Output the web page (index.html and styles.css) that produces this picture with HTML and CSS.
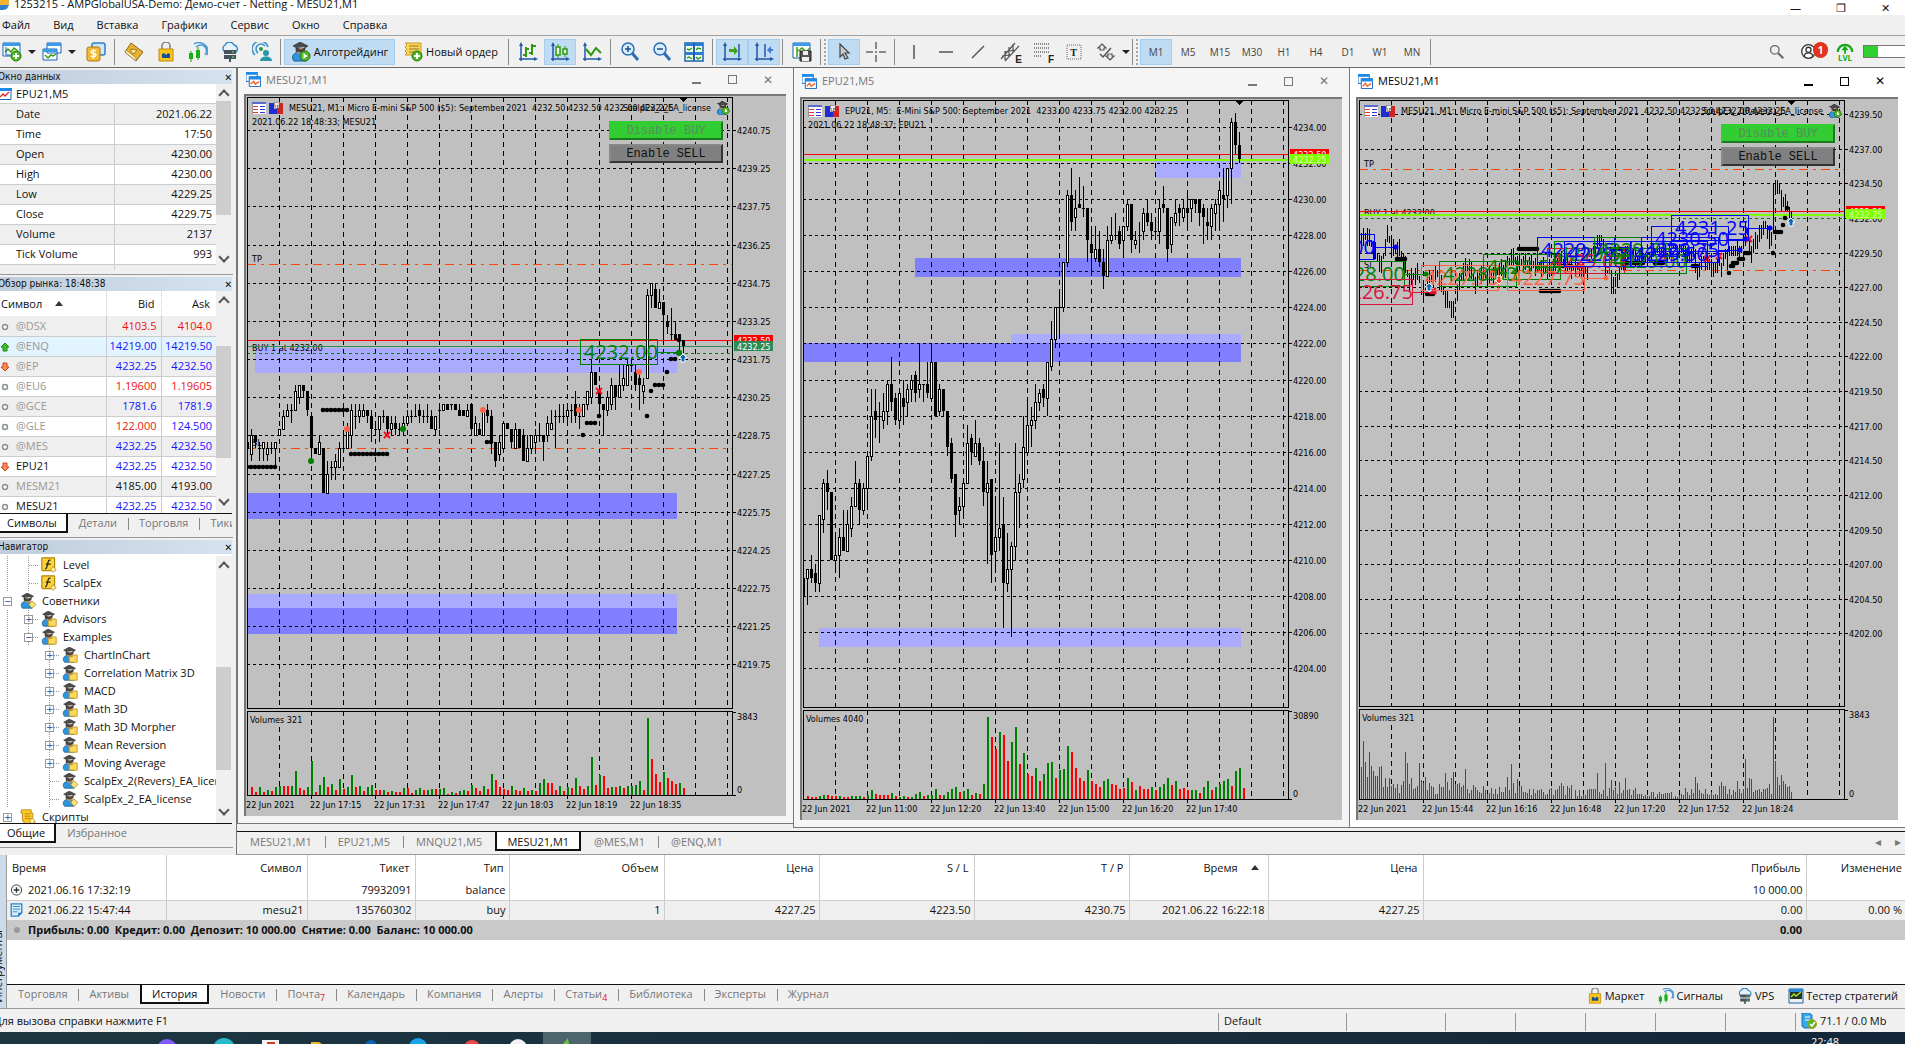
FILE: index.html
```
<!DOCTYPE html>
<html lang="ru">
    <head>
        <meta charset="utf-8">
        <title>1253215 - AMPGlobalUSA-Demo: Демо-счет - Netting - MESU21,M1</title>
        <link rel="stylesheet" href="styles.css">
    </head>
    <body>

<!----- ICONS ----->
        <svg class="sprite" aria-hidden="true">
            <symbol id="i-newchart" viewBox="0 0 20 20">
                <path d="M1 1h17v13H1z" fill="#fff" stroke="#1565b5"/><path d="M1 1h17v3H1z" fill="#3b9bea"/>
                <path d="M3 10l3-3 3 3 3-4 4 3" fill="none" stroke="#3a9a10" stroke-width="1.5"/><path d="M4 5v8h12" fill="none" stroke="#1d5fa8"/>
                <circle cx="14" cy="14" r="5" fill="#4cb825" stroke="#2c7a10"/><path d="M14 11v6M11 14h6" stroke="#fff" stroke-width="2"/>
            </symbol>
            <symbol id="i-windows" viewBox="0 0 20 20">
                <path d="M5 1h14v10H5zM1 7h14v11H1z" fill="#fff" stroke="#1565b5"/><path d="M5 1h14v3H5zM1 7h14v3H1z" fill="#3b9bea"/>
                <path d="M3 13l3 3 3-3 2 1 3-2" fill="none" stroke="#3a9a10" stroke-width="1.5"/>
            </symbol>
            <symbol id="i-money" viewBox="0 0 20 20">
                <rect x="6" y="1" width="13" height="12" rx="2" fill="#cfe6fb" stroke="#2f7fca" stroke-width="1.5"/>
                <rect x="1" y="5" width="13" height="14" rx="2" fill="#f3bb35" stroke="#ad7b0d"/>
                <path d="M10 9c-1-1-5-1-5 1s5 1 5 3-4 2-5 1M7.500 7v10" fill="none" stroke="#fff" stroke-width="1.400"/>
            </symbol>
            <symbol id="i-book" viewBox="0 0 20 20">
                <path d="M7 1l12 9-7 9-11-9z" fill="#e8b230" stroke="#8d6410"/><path d="M1 10l11 9v-3L2 8z" fill="#fff5c9" stroke="#8d6410" stroke-width=".6"/>
                <path d="M7 7l6 1-3 4-3-2z" fill="#fae9a5" stroke="#a97410"/>
            </symbol>
            <symbol id="i-bag" viewBox="0 0 20 20">
                <path d="M6 8V4a4 4 0 0 1 8 0v4" fill="none" stroke="#7d7d7d" stroke-width="1.500"/>
                <path d="M3 7h14v12H3z" fill="#fbc51b" stroke="#c18a0b"/><path d="M6 16v-4l2-1 2 2 2-2 2 1v4z" fill="#14509b"/>
            </symbol>
            <symbol id="i-signal" viewBox="0 0 20 20">
                <path d="M8 5a6 6 0 0 1 9 8M6 2a9 9 0 0 1 12 2 8 8 0 0 1 1 9" fill="none" stroke="#4b9ad8" stroke-width="1.500"/>
                <path d="M3 9v11M10 5v13" stroke="#18a018"/><path d="M1 11h4v6H1zM8 8h4v8H8z" fill="#18b018"/>
            </symbol>
            <symbol id="i-cloud" viewBox="0 0 20 20">
                <path d="M5 10a4 4 0 0 1 0-7 5 5 0 0 1 9 0 4 4 0 0 1 2 7z" fill="#e4f2fc" stroke="#2580c4" stroke-width="1.300"/>
                <path d="M4 8h12v4H4zM4 13h12v4H4zM9 17h2v3H9z" fill="#47535b"/><path d="M12 10h2M12 15h2" stroke="#6f5"/>
            </symbol>
            <symbol id="i-cast" viewBox="0 0 20 20">
                <path d="M3 13a8 8 0 1 1 13-8M6 11a5 5 0 1 1 7-7" fill="none" stroke="#3a94d2" stroke-width="1.600"/>
                <circle cx="9" cy="7" r="2" fill="#2e9b3a"/><circle cx="14" cy="11" r="3" fill="#2597a7"/><path d="M8 19c0-6 12-6 12 0z" fill="#2597a7"/>
            </symbol>
            <symbol id="i-robot" viewBox="0 0 20 20">
                <path d="M3 19c-4-5 1-9 5-9s7 4 7 9z" fill="#2f95de" stroke="#1c5f97"/><path d="M5 6h9v4l-4 3-5-3z" fill="#b99269"/>
                <path d="M2 4l7-4 8 4-7 4zM5 6v3l5 1 4-2V5" fill="#4a4a4a" stroke="#222" stroke-width=".6"/>
            </symbol>
            <symbol id="i-algo" viewBox="0 0 20 20">
                <use href="#i-robot"/><circle cx="14" cy="14" r="5" fill="#53b72d" stroke="#2a7010"/><path d="M12.500 11l4 3-4 3z" fill="#fff"/>
            </symbol>
            <symbol id="i-expert" viewBox="0 0 20 20">
                <use href="#i-robot"/><path d="M15 10l5 4.500-5 4.500-4-4.500z" fill="#fbe37b" stroke="#b08a13"/>
            </symbol>
            <symbol id="i-folder" viewBox="0 0 20 20">
                <use href="#i-robot"/><path d="M9 12h4l1-2h5v9H9z" fill="#fbd95b" stroke="#b98f12"/>
            </symbol>
            <symbol id="i-func" viewBox="0 0 20 20">
                <rect x="1" y="1" width="16" height="16" rx="1" fill="#fcd337" stroke="#b38505" stroke-width="1.500"/>
                <path d="M12 4c-3-1-3 2-4 6s-1 5-3 5M6 9h6" fill="none" stroke="#222" stroke-width="1.500"/>
                <path d="M15 12l4 4-4 3-3-3z" fill="#fff3b0" stroke="#b08a13"/>
            </symbol>
            <symbol id="i-script" viewBox="0 0 20 20">
                <path d="M2 1h12v4h2v9l3 3-2 2H5v-4H3V5H1z" fill="#fcc92d" stroke="#b07f09"/><path d="M6 6h7M6 9h7M6 12h7" stroke="#a9760a"/>
                <path d="M15 11l4 4-4 4-3-4z" fill="#fff3b0" stroke="#b08a13"/>
            </symbol>
            <symbol id="i-order" viewBox="0 0 20 20">
                <path d="M2 1h16v12H2l2-2-2-2 2-2-2-2 2-2z" fill="#fbd65e" stroke="#c9982a"/><path d="M6 4h10M6 7h10M6 10h7" stroke="#9a7420"/>
                <circle cx="14" cy="14" r="5" fill="#4cb825" stroke="#2c7a10"/><path d="M14 11v6M11 14h6" stroke="#fff" stroke-width="2"/>
            </symbol>
            <symbol id="i-axes" viewBox="0 0 20 20">
                <path d="M3 19V2M1 17h17" fill="none" stroke="#2257a8" stroke-width="1.500"/><path d="M1 4l2-4 2 4zM16 15l4 2-4 2z" fill="#2257a8"/>
            </symbol>
            <symbol id="i-bars" viewBox="0 0 20 20"><use href="#i-axes"/><path d="M8 5v10M5 13h3M8 7h3M14 2v11M14 4h4M11 11h3" fill="none" stroke="#2f9a10" stroke-width="2"/></symbol>
            <symbol id="i-candles" viewBox="0 0 20 20"><use href="#i-axes"/><path d="M8 2v14M15 4v11" stroke="#2f9a10"/><path d="M6 5h4v8H6zM13 7h4v5h-4z" fill="#e8ffe0" stroke="#2f9a10" stroke-width="1.500"/></symbol>
            <symbol id="i-line" viewBox="0 0 20 20"><use href="#i-axes"/><path d="M4 7l5 6 5-7 5 5" fill="none" stroke="#2f9a10" stroke-width="2"/></symbol>
            <symbol id="i-zoomin" viewBox="0 0 20 20"><path d="M12 11l6 7" stroke="#2a6db8" stroke-width="3"/><circle cx="8" cy="7" r="6" fill="#d9edfd" stroke="#2a6db8" stroke-width="1.500"/><path d="M8 4v6M5 7h6" stroke="#184f92" stroke-width="1.500"/></symbol>
            <symbol id="i-zoomout" viewBox="0 0 20 20"><path d="M12 11l6 7" stroke="#2a6db8" stroke-width="3"/><circle cx="8" cy="7" r="6" fill="#d9edfd" stroke="#2a6db8" stroke-width="1.500"/><path d="M5 7h6" stroke="#184f92" stroke-width="1.500"/></symbol>
            <symbol id="i-tile" viewBox="0 0 20 20">
                <path d="M1 1h18v18H1z" fill="#f4fff0" stroke="#1d63ad" stroke-width="1.500"/><path d="M1 1h18v3H1zM1 10h18v3H1z" fill="#2b7fd0"/><path d="M10 1v18" stroke="#1d63ad" stroke-width="2"/>
                <path d="M3 7l2 1 3-2M12 8l2-2 3 1M3 16l2-1 3 2M12 15l2 2 3-2" fill="none" stroke="#2f9a10" stroke-width="1.500"/>
            </symbol>
            <symbol id="i-scroll" viewBox="0 0 20 20"><use href="#i-axes"/><path d="M17 2v13" stroke="#2257a8" stroke-width="1.500"/><path d="M7 7h5V4l4 5-4 4v-3H7z" fill="#3aa31a"/></symbol>
            <symbol id="i-shift" viewBox="0 0 20 20"><use href="#i-axes"/><path d="M11 2v13" stroke="#2257a8" stroke-width="1.500"/><path d="M19 7h-2V4l-4 4 4 4v-3h2z" fill="#3b7bd0"/></symbol>
            <symbol id="i-save" viewBox="0 0 20 20">
                <path d="M1 1h17v15H1z" fill="#fff" stroke="#1565b5"/><path d="M1 1h17v3H1z" fill="#3b9bea"/><path d="M5 5v10M6 9l4-3 4 4 4-4" fill="none" stroke="#3a9a10" stroke-width="1.500"/>
                <path d="M8 9h11v10H8z" fill="#555" stroke="#222"/><path d="M11 9h5v4h-5zM10 15h7v4h-7z" fill="#eee"/>
            </symbol>
            <symbol id="i-cursor" viewBox="0 0 20 20"><path d="M6 2v13l3-3 2 5 3-1-3-5h4z" fill="#ccc" stroke="#444" stroke-width="1.200"/></symbol>
            <symbol id="i-cross" viewBox="0 0 20 20"><path d="M10 0v7M10 13v7M0 10h7M13 10h7M10 9v2" stroke="#666" stroke-width="1.500"/></symbol>
            <symbol id="i-vline" viewBox="0 0 20 20"><path d="M10 3v14" stroke="#555" stroke-width="1.500"/></symbol>
            <symbol id="i-hline" viewBox="0 0 20 20"><path d="M3 10h14" stroke="#555" stroke-width="1.500"/></symbol>
            <symbol id="i-slash" viewBox="0 0 20 20"><path d="M4 16L16 4" stroke="#555" stroke-width="1.500"/></symbol>
            <symbol id="i-channel" viewBox="0 0 20 20"><path d="M1 17L15 1M5 19L19 4M5 9v9M9 5v9M13 2v8M2 14l8-1M5 10l9-2" fill="none" stroke="#555" stroke-width="1.200"/></symbol>
            <symbol id="i-fibo" viewBox="0 0 20 20"><path d="M2 2h15M2 6h15M2 10h15M2 14h8" stroke="#666" stroke-width="1.500" stroke-dasharray="1 1"/></symbol>
            <symbol id="i-text" viewBox="0 0 20 20"><path d="M3 3h14v14H3z" fill="none" stroke="#666" stroke-dasharray="1 1"/></symbol>
            <symbol id="i-arrows" viewBox="0 0 20 20"><path d="M6 2l4 4H8v2H4V6H2zM14 18l4-4h-2v-2h-4v2h-2z" fill="none" stroke="#555" stroke-width="1.200"/><path d="M4 12l3 3 8-9" fill="none" stroke="#555" stroke-width="1.500"/></symbol>
            <symbol id="i-search" viewBox="0 0 20 20"><circle cx="8" cy="8" r="5" fill="none" stroke="#666" stroke-width="1.500"/><path d="M12 12l6 6" stroke="#666" stroke-width="2.500"/></symbol>
            <symbol id="i-user" viewBox="0 0 20 20"><circle cx="10" cy="10" r="8" fill="#fff" stroke="#333" stroke-width="1.500"/><circle cx="10" cy="8" r="3" fill="none" stroke="#333" stroke-width="1.500"/><path d="M5 16c0-6 10-6 10 0" fill="none" stroke="#333" stroke-width="1.500"/></symbol>
            <symbol id="i-level" viewBox="0 0 20 14"><path d="M2 12a8 8 0 1 1 16 0" fill="none" stroke="#19a819" stroke-width="2.500"/><path d="M10 5l4 5h-3v4H9v-4H6z" fill="#19a819"/></symbol>
            <symbol id="i-chart" viewBox="0 0 16 16">
                <path d="M0 0h12v10H0z" fill="#fff" stroke="#1268c4"/><path d="M0 0h12v3H0z" fill="#1e8ae8"/>
                <path d="M3.500 5h12v10.500h-12z" fill="#fff" stroke="#1268c4"/><path d="M3 5h13v3H3z" fill="#1e8ae8"/><path d="M5 13l3-3 2 3 4-3" fill="none" stroke="#f0642b" stroke-width="1.500"/>
            </symbol>
            <symbol id="i-data" viewBox="0 0 12 12"><path d="M-4 .5h15v11H-4z" fill="#fff" stroke="#1268c4"/><path d="M-4 0h16v3H-4z" fill="#1e8ae8"/><path d="M0 9l3-3 2 2 4-4" fill="none" stroke="#e03030" stroke-width="1.500"/></symbol>
            <symbol id="i-doc" viewBox="0 0 14 16"><path d="M1 1h12v10l-4 4H1z" fill="#d5ecfc" stroke="#2386cc" stroke-width="1.500"/><path d="M3 4h8M3 7h8M3 10h5" stroke="#2386cc"/><path d="M9 15v-4h4z" fill="#1673ba"/></symbol>
            <symbol id="i-plus" viewBox="0 0 14 14"><circle cx="7" cy="7" r="5.500" fill="#fff" stroke="#333"/><path d="M7 4v6M4 7h6" stroke="#333" stroke-width="1.500"/></symbol>
            <symbol id="i-tester" viewBox="0 0 16 16"><path d="M1 1h14v14H1z" fill="#eee" stroke="#1c60ab"/><path d="M1 1h14v3H1z" fill="#2d86da"/><path d="M2 4h12v7H2z" fill="#253326"/><path d="M3 9l3-3 2 2 5-4" fill="none" stroke="#a5e02a" stroke-width="1.500"/></symbol>
            <symbol id="i-server" viewBox="0 0 16 16"><path d="M1 0h7l3 2v13H3l-2-2z" fill="#3aa7ea" stroke="#1873b8"/><path d="M4 4h5M4 7h5" stroke="#fff"/><circle cx="11" cy="11" r="4.500" fill="#53b72d" stroke="#b79c15"/><path d="M9 11l2 2 3-4" fill="none" stroke="#fff" stroke-width="1.500"/></symbol>
            <symbol id="i-none" viewBox="0 0 10 10"><circle cx="5" cy="5" r="2.500" fill="#fff" stroke="#8a958a" stroke-width="1.500"/></symbol>
            <symbol id="i-up" viewBox="0 0 10 10"><path d="M5 1l4 4H7v4H3V5H1z" fill="#3dc22b" stroke="#178a0c"/></symbol>
            <symbol id="i-down" viewBox="0 0 10 10"><path d="M5 9l4-4H7V1H3v4H1z" fill="#ff8a5c" stroke="#d2421a"/></symbol>
            <symbol id="i-market" viewBox="0 0 14 12"><path d="M0 0h14v12H0z" fill="#fff" stroke="#999"/><path d="M0 0h14v2H0z" fill="#5a6ad0"/><path d="M1 4h5M1 7h5M1 10h5" stroke="#e33"/><path d="M8 4h5M8 7h5M8 10h5" stroke="#33d"/></symbol>
            <symbol id="i-trade" viewBox="0 0 14 12"><path d="M0 1h5v6h3v5H0z" fill="#1d2fd0"/><path d="M14 1h-4v5H8v6h6z" fill="#d02525"/><path d="M5 0h5v3H8v3H6V3H5z" fill="#eee" stroke="#555" stroke-width=".5"/></symbol>
        </svg>

        <header class="titlebar">
            <span class="title-text"><span class="app-logo"></span>1253215 - AMPGlobalUSA-Demo: Демо-счет - Netting - MESU21,M1</span>
            <span class="title-buttons"><button aria-label="Свернуть">—</button><button aria-label="Восстановить">❐</button><button aria-label="Закрыть">✕</button></span>
        </header>

        <nav class="menu">
            <a href="#">Файл</a><a href="#">Вид</a><a href="#">Вставка</a><a href="#">Графики</a><a href="#">Сервис</a><a href="#">Окно</a><a href="#">Справка</a>
        </nav>

<!----- TOOLBAR ----->
        <div class="toolbar">
            <button class="tb drop" aria-label="Новый график"><svg><use href="#i-newchart"/></svg><i class="caret"></i></button>
            <button class="tb drop" aria-label="Профили"><svg><use href="#i-windows"/></svg><i class="caret"></i></button>
            <button class="tb" aria-label="Обзор рынка"><svg><use href="#i-money"/></svg></button>
            <i class="sep"></i>
            <button class="tb" aria-label="Навигатор"><svg><use href="#i-book"/></svg></button>
            <button class="tb" aria-label="Маркет"><svg><use href="#i-bag"/></svg></button>
            <button class="tb" aria-label="Сигналы"><svg><use href="#i-signal"/></svg></button>
            <button class="tb" aria-label="VPS"><svg><use href="#i-cloud"/></svg></button>
            <button class="tb" aria-label="Сообщество"><svg><use href="#i-cast"/></svg></button>
            <i class="sep"></i>
            <button class="tb wide on"><svg><use href="#i-algo"/></svg>Алготрейдинг</button>
            <button class="tb wide"><svg><use href="#i-order"/></svg>Новый ордер</button>
            <i class="sep"></i>
            <button class="tb" aria-label="Бары"><svg><use href="#i-bars"/></svg></button>
            <button class="tb on" aria-label="Свечи"><svg><use href="#i-candles"/></svg></button>
            <button class="tb" aria-label="Линия"><svg><use href="#i-line"/></svg></button>
            <i class="sep"></i>
            <button class="tb" aria-label="Увеличить"><svg><use href="#i-zoomin"/></svg></button>
            <button class="tb" aria-label="Уменьшить"><svg><use href="#i-zoomout"/></svg></button>
            <button class="tb" aria-label="Плитка"><svg><use href="#i-tile"/></svg></button>
            <i class="sep"></i>
            <button class="tb on" aria-label="Автопрокрутка"><svg><use href="#i-scroll"/></svg></button>
            <button class="tb on" aria-label="Сдвиг"><svg><use href="#i-shift"/></svg></button>
            <i class="sep"></i>
            <button class="tb" aria-label="Шаблоны"><svg><use href="#i-save"/></svg></button>
            <i class="sep"></i><i class="grip"></i>
            <button class="tb on" aria-label="Курсор"><svg><use href="#i-cursor"/></svg></button>
            <button class="tb" aria-label="Перекрестие"><svg><use href="#i-cross"/></svg></button>
            <i class="sep"></i>
            <button class="tb" aria-label="Вертикальная линия"><svg><use href="#i-vline"/></svg></button>
            <button class="tb" aria-label="Горизонтальная линия"><svg><use href="#i-hline"/></svg></button>
            <button class="tb" aria-label="Трендовая линия"><svg><use href="#i-slash"/></svg></button>
            <button class="tb" aria-label="Канал"><svg><use href="#i-channel"/></svg><b class="letter">E</b></button>
            <button class="tb" aria-label="Фибоначчи"><svg><use href="#i-fibo"/></svg><b class="letter">F</b></button>
            <button class="tb" aria-label="Текст"><svg><use href="#i-text"/></svg><b class="letter mid">T</b></button>
            <button class="tb" aria-label="Стрелки"><svg><use href="#i-arrows"/></svg></button><i class="caret"></i>
            <i class="sep"></i><i class="grip"></i>
            <button class="tb on">M1</button><button class="tb">M5</button><button class="tb">M15</button><button class="tb">M30</button><button class="tb">H1</button><button class="tb">H4</button><button class="tb">D1</button><button class="tb">W1</button><button class="tb">MN</button>
            <i class="sep"></i>
            <div class="tb-right">
                <button class="tb" aria-label="Поиск"><svg><use href="#i-search"/></svg></button>
                <button class="tb" aria-label="Сообщения"><svg><use href="#i-user"/></svg><b class="badge">1</b></button>
                <button class="tb lvl"><svg><use href="#i-level"/></svg>LVL</button>
                <span class="meter"><span></span></span>
            </div>
        </div>

        <div class="work">
<!----- LEFT PANELS ----->
            <aside class="side">
                <section class="panel">
                    <h2>Окно данных<button aria-label="Закрыть">✕</button></h2>
                    <div class="scroll data-box">
                        <div class="view">
                            <div class="data-symbol"><svg><use href="#i-data"/></svg>EPU21,M5</div>
                            <table class="data">
                                <tr><td>Date</td><td>2021.06.22</td></tr>
                                <tr><td>Time</td><td>17:50</td></tr>
                                <tr><td>Open</td><td>4230.00</td></tr>
                                <tr><td>High</td><td>4230.00</td></tr>
                                <tr><td>Low</td><td>4229.25</td></tr>
                                <tr><td>Close</td><td>4229.75</td></tr>
                                <tr><td>Volume</td><td>2137</td></tr>
                                <tr><td>Tick Volume</td><td>993</td></tr>
                                <tr><td>Spread</td><td>25</td></tr>
                            </table>
                        </div>
                        <div class="bar"><i class="thumb data-thumb"></i></div>
                    </div>
                </section>

                <section class="panel">
                    <h2>Обзор рынка: 18:48:38<button aria-label="Закрыть">✕</button></h2>
                    <div class="scroll market-box">
                        <div class="view">
                            <table class="market">
                                <tr><th>Символ <i class="asc"></i></th><th>Bid</th><th>Ask</th></tr>
                                <tr class="off"><td><svg><use href="#i-none"/></svg>@DSX</td><td class="dn">4103.5</td><td class="dn">4104.0</td></tr>
                                <tr class="off hot"><td><svg><use href="#i-up"/></svg>@ENQ</td><td>14219.00</td><td>14219.50</td></tr>
                                <tr class="off"><td><svg><use href="#i-down"/></svg>@EP</td><td>4232.25</td><td>4232.50</td></tr>
                                <tr class="off"><td><svg><use href="#i-none"/></svg>@EU6</td><td class="dn">1.19600</td><td class="dn">1.19605</td></tr>
                                <tr class="off"><td><svg><use href="#i-none"/></svg>@GCE</td><td>1781.6</td><td>1781.9</td></tr>
                                <tr class="off"><td><svg><use href="#i-none"/></svg>@GLE</td><td class="dn">122.000</td><td>124.500</td></tr>
                                <tr class="off"><td><svg><use href="#i-none"/></svg>@MES</td><td>4232.25</td><td>4232.50</td></tr>
                                <tr><td><svg><use href="#i-down"/></svg>EPU21</td><td>4232.25</td><td>4232.50</td></tr>
                                <tr class="off"><td><svg><use href="#i-none"/></svg>MESM21</td><td class="flat">4185.00</td><td class="flat">4193.00</td></tr>
                                <tr><td><svg><use href="#i-none"/></svg>MESU21</td><td>4232.25</td><td>4232.50</td></tr>
                            </table>
                        </div>
                        <div class="bar"><i class="thumb market-thumb"></i></div>
                    </div>
                    <div class="tabs"><a href="#" class="active">Символы</a><a href="#">Детали</a><a href="#">Торговля</a><a href="#">Тики</a></div>
                </section>

                <section class="panel">
                    <h2>Навигатор<button aria-label="Закрыть">✕</button></h2>
                    <div class="scroll nav-box">
                        <ul class="view tree">
                            <li class="l2"><svg><use href="#i-func"/></svg>Level</li>
                            <li class="l2"><svg><use href="#i-func"/></svg>ScalpEx</li>
                            <li class="l1"><i class="box">−</i><svg><use href="#i-expert"/></svg>Советники</li>
                            <li class="l2"><i class="box">+</i><svg><use href="#i-folder"/></svg>Advisors</li>
                            <li class="l2"><i class="box">−</i><svg><use href="#i-folder"/></svg>Examples</li>
                            <li class="l3"><i class="box">+</i><svg><use href="#i-folder"/></svg>ChartInChart</li>
                            <li class="l3"><i class="box">+</i><svg><use href="#i-folder"/></svg>Correlation Matrix 3D</li>
                            <li class="l3"><i class="box">+</i><svg><use href="#i-folder"/></svg>MACD</li>
                            <li class="l3"><i class="box">+</i><svg><use href="#i-folder"/></svg>Math 3D</li>
                            <li class="l3"><i class="box">+</i><svg><use href="#i-folder"/></svg>Math 3D Morpher</li>
                            <li class="l3"><i class="box">+</i><svg><use href="#i-folder"/></svg>Mean Reversion</li>
                            <li class="l3"><i class="box">+</i><svg><use href="#i-folder"/></svg>Moving Average</li>
                            <li class="l3"><svg><use href="#i-expert"/></svg>ScalpEx_2(Revers)_EA_license</li>
                            <li class="l3"><svg><use href="#i-expert"/></svg>ScalpEx_2_EA_license</li>
                            <li class="l1"><i class="box">+</i><svg><use href="#i-script"/></svg>Скрипты</li>
                        </ul>
                        <div class="bar"><i class="thumb nav-thumb"></i></div>
                    </div>
                    <div class="tabs"><a href="#" class="active">Общие</a><a href="#">Избранное</a></div>
                </section>
            </aside>

<!----- CHART WINDOWS ----->
            <main class="mdi">
                <div class="windows">
                    <section class="win short">
                        <header><svg><use href="#i-chart"/></svg><span>MESU21,M1</span><button aria-label="Свернуть"><i class="min"></i></button><button aria-label="Развернуть"><i class="max"></i></button><button aria-label="Закрыть">✕</button></header>
                        <div class="client">
                            <svg class="chart" id="chart1"></svg>
                            <div class="trade-buttons"><button class="buy">Disable BUY</button><button class="sell">Enable SELL</button></div>
                        </div>
                    </section>
                    <section class="win">
                        <header><svg><use href="#i-chart"/></svg><span>EPU21,M5</span><button aria-label="Свернуть"><i class="min"></i></button><button aria-label="Развернуть"><i class="max"></i></button><button aria-label="Закрыть">✕</button></header>
                        <div class="client"><svg class="chart" id="chart2"></svg></div>
                    </section>
                    <section class="win current">
                        <header><svg><use href="#i-chart"/></svg><span>MESU21,M1</span><button aria-label="Свернуть"><i class="min"></i></button><button aria-label="Развернуть"><i class="max"></i></button><button aria-label="Закрыть">✕</button></header>
                        <div class="client">
                            <svg class="chart" id="chart3"></svg>
                            <div class="trade-buttons"><button class="buy">Disable BUY</button><button class="sell">Enable SELL</button></div>
                        </div>
                    </section>
                </div>
                <div class="tabs chart-tabs"><a href="#">MESU21,M1</a><a href="#">EPU21,M5</a><a href="#">MNQU21,M5</a><a href="#" class="active">MESU21,M1</a><a href="#">@MES,M1</a><a href="#">@ENQ,M1</a><span class="tab-arrows">◂<span>▸</span></span></div>
            </main>
        </div>

<!----- TOOLBOX ----->
        <section class="toolbox">
            <div class="strip"><span>Инструменты</span></div>
            <div class="toolbox-body">
                <table class="history">
                    <colgroup><col class="c1"><col class="c2"><col class="c3"><col class="c4"><col class="c5"><col class="c5"><col class="c5"><col class="c5"><col class="c6"><col class="c5"><col><col class="c7"></colgroup>
                    <tr><th>Время</th><th>Символ</th><th>Тикет</th><th>Тип</th><th>Объем</th><th>Цена</th><th>S / L</th><th>T / P</th><th>Время <i class="asc"></i></th><th>Цена</th><th>Прибыль</th><th>Изменение</th></tr>
                    <tr><td><svg><use href="#i-plus"/></svg>2021.06.16 17:32:19</td><td></td><td>79932091</td><td>balance</td><td></td><td></td><td></td><td></td><td></td><td></td><td>10 000.00</td><td></td></tr>
                    <tr class="alt"><td><svg><use href="#i-doc"/></svg>2021.06.22 15:47:44</td><td>mesu21</td><td>135760302</td><td>buy</td><td>1</td><td>4227.25</td><td>4223.50</td><td>4230.75</td><td>2021.06.22 16:22:18</td><td>4227.25</td><td>0.00</td><td>0.00 %</td></tr>
                    <tr class="total"><td colspan="10"><i class="bullet"></i>Прибыль: 0.00&nbsp; Кредит: 0.00&nbsp; Депозит: 10 000.00&nbsp; Снятие: 0.00&nbsp; Баланс: 10 000.00</td><td>0.00</td><td></td></tr>
                </table>
                <div class="tabs tool-tabs">
                    <a href="#">Торговля</a><a href="#">Активы</a><a href="#" class="active">История</a><a href="#">Новости</a><a href="#">Почта<sub>7</sub></a><a href="#">Календарь</a><a href="#">Компания</a><a href="#">Алерты</a><a href="#">Статьи<sub>4</sub></a><a href="#">Библиотека</a><a href="#">Эксперты</a><a href="#">Журнал</a>
                    <div class="links">
                        <a href="#"><svg><use href="#i-bag"/></svg>Маркет</a><a href="#"><svg><use href="#i-signal"/></svg>Сигналы</a><a href="#"><svg><use href="#i-cloud"/></svg>VPS</a><a href="#"><svg><use href="#i-tester"/></svg>Тестер стратегий</a>
                    </div>
                </div>
            </div>
        </section>

        <footer class="status">
            <span class="hint">Для вызова справки нажмите F1</span>
            <span class="s1">Default</span><span class="s2"></span><span></span><span></span><span></span><span></span><span></span>
            <span class="net"><svg><use href="#i-server"/></svg>71.1 / 0.0 Mb</span>
        </footer>
        <div class="taskbar">
            <svg class="apps">
                <circle cx="167" cy="17" r="10" fill="#7f5cf5"/><circle cx="224" cy="17" r="11" fill="#27b9c8"/><path d="M262 8h17v6h-17z" fill="#f3f3f3"/><path d="M267 10h8v4h-8z" fill="#d33c24"/>
                <path d="M311 10h8l3 2v2h-11z" fill="#f0b429"/><circle cx="371" cy="14" r="6" fill="#0b62b5"/><circle cx="418" cy="15" r="9" fill="#17a5ea"/><circle cx="472" cy="16" r="8" fill="#e84b45"/>
                <circle cx="518" cy="16" r="9" fill="#f2f2f2"/><path d="M543 0h48v12h-48z" fill="#4c646b"/><path d="M563 12l5-6 1 6z" fill="#68c43f"/>
            </svg>
            <span>22:48</span>
        </div>

        <script src="charts.js"></script>
    </body>
</html>
```

FILE: styles.css
```
            * {
                box-sizing: border-box;
            }
            body{
                margin: 0;
                height: 100vh;
                display: flex;
                flex-direction: column;
                overflow: hidden;
                background-color: #f0f0f0;
                color: #111;
                font: 11px/16px "Open Sans", "Noto Sans", sans-serif;
            }
            button{
                margin: 0;
                padding: 0;
                border: 0;
                background: none;
                color: inherit;
                font: inherit;
            }
            a{
                color: inherit;
                text-decoration: none;
            }
            h2{
                margin: 0;
            }
            table{
                width: 100%;
                border-collapse: collapse;
                table-layout: fixed;
            }
            th{
                font-weight: normal;
            }
            .sprite{
                position: absolute;
                width: 0;
                height: 0;
            }

/*----- TITLE AND MENU -----*/
            .titlebar{
                flex: none;
                display: flex;
                justify-content: space-between;
                height: 15px;
                line-height: 8px;
                background-color: #fff;
                overflow: hidden;
            }
            .title-text{
                display: flex;
                gap: 5px;
            }
            .app-logo{
                width: 9px;
                height: 10px;
                border-radius: 0 0 6px 0;
                background: linear-gradient(#f2b233 50%, #2f7fca 50%);
            }
            .title-buttons{
                display: flex;
                gap: 30px;
                padding-right: 12px;
                line-height: 6px;
            }
            .title-buttons button{
                width: 15px;
            }
            .menu{
                flex: none;
                display: flex;
                gap: 23px;
                height: 21px;
                padding: 2px 2px 0;
                border-bottom: 1px solid #a0a0a0;
            }

/*----- TOOLBAR -----*/
            .toolbar{
                flex: none;
                display: flex;
                align-items: center;
                height: 32px;
                border-bottom: 1px solid #6a6a6a;
            }
            .tb{
                flex: none;
                position: relative;
                display: flex;
                align-items: center;
                justify-content: center;
                width: 32px;
                height: 26px;
                color: #444;
                font-size: 10px;
            }
            .tb svg{
                width: 20px;
                height: 20px;
            }
            .tb.on{
                background-color: #bfdcf3;
                border: 1px solid #a5cdee;
            }
            .tb.wide{
                gap: 3px;
                width: 111px;
                color: #111;
                font-size: 11px;
            }
            .tb.drop{
                gap: 6px;
                width: 40px;
                padding-right: 2px;
            }
            .caret{
                border: 4px solid transparent;
                border-top-color: #222;
                border-bottom: 0;
            }
            .sep{
                flex: none;
                width: 1px;
                height: 26px;
                margin: 0 3px 0 2px;
                background-color: #8c8c8c;
            }
            .grip{
                flex: none;
                width: 4px;
                height: 26px;
                border-left: 2px dotted #a8a8a8;
            }
            .letter{
                position: absolute;
                right: 4px;
                bottom: 0;
                color: #222;
                font: bold 10px/10px "Liberation Sans", sans-serif;
            }
            .letter.mid{
                right: 13px;
                bottom: 7px;
                font-family: "Liberation Serif", serif;
            }
            .tb-right{
                display: flex;
                align-items: center;
                margin-left: auto;
            }
            .tb-right svg{
                width: 17px;
                height: 17px;
            }
            .badge{
                position: absolute;
                left: 21px;
                top: 3px;
                width: 15px;
                height: 16px;
                border-radius: 8px;
                background-color: #e0341c;
                color: #fff;
                text-align: center;
            }
            .tb.lvl{
                flex-direction: column;
                width: 30px;
                margin-left: 6px;
                color: #19a819;
                font: bold 8px/8px "Open Sans", sans-serif;
            }
            .tb.lvl svg{
                width: 18px;
                height: 13px;
            }
            .meter{
                width: 42px;
                height: 13px;
                margin-left: 3px;
                border: 1px solid #777;
                border-right: 0;
                background-color: #fff;
            }
            .meter span{
                display: block;
                width: 14px;
                height: 11px;
                background-color: #2fd12f;
            }

/*----- LEFT PANELS -----*/
            .work{
                flex: 1;
                display: flex;
                min-height: 0;
            }
            .side{
                flex: none;
                width: 237px;
                padding-right: 3px;
                border-right: 1px solid #777;
            }
            .panel{
                padding: 2px 1px 4px 0;
                border-bottom: 1px solid #999;
            }
            .panel h2{
                display: flex;
                justify-content: space-between;
                height: 14px;
                background: linear-gradient(90deg, #bfcddd, #d5e2ef);
                font: 10px/13px "DejaVu Sans Condensed", sans-serif;
                text-indent: -2px;
            }
            .panel h2 button{
                font-weight: bold;
            }
            .scroll{
                display: flex;
                background-color: #fff;
                overflow: hidden;
            }
            .view{
                flex: 1;
                min-width: 0;
            }
            .data-box{
                height: 186px;
            }
            .market-box{
                height: 222px;
            }
            .nav-box{
                height: 269px;
                padding-top: 2px;
            }
            .bar{
                width: 16px;
                padding: 0 1px 0 0;
                display: flex;
                flex-direction: column;
                align-items: center;
                justify-content: space-between;
                background-color: #f0f0f0;
            }
            .bar::before, .bar::after{
                content: "";
                flex: none;
                width: 6px;
                height: 6px;
                margin: 7px 0 2px;
                border: solid #555;
                border-width: 2px 0 0 2px;
                transform: rotate(45deg);
            }
            .bar::after{
                margin: 0 0 9px;
                transform: rotate(225deg);
            }
            .thumb{
                width: 15px;
                background-color: #cdcdcd;
            }
            .data-thumb{
                height: 114px;
                margin-bottom: auto;
            }
            .market-thumb{
                height: 112px;
                margin: 38px 0 auto;
            }
            .nav-thumb{
                height: 103px;
                margin: auto 0 36px;
            }
            .data-symbol{
                display: flex;
                align-items: center;
                gap: 4px;
                height: 20px;
                border-bottom: 1px solid #ccc;
            }
            .data-symbol svg{
                width: 12px;
                height: 12px;
            }
            .data td{
                height: 20px;
                padding: 0 4px 0 16px;
                border-bottom: 1px solid #ccc;
            }
            .data tr:nth-child(odd){
                background-color: #efefef;
            }
            .data td:first-child{
                width: 114px;
                border-right: 1px solid #ccc;
            }
            .data td:last-child{
                padding-left: 0;
                text-align: right;
            }
            .market th{
                width: 55px;
                height: 25px;
                padding: 0 6px 0 0;
                border-right: 1px dotted #ccc;
                text-align: right;
            }
            .market th:first-child{
                width: auto;
                padding-left: 1px;
                text-align: left;
            }
            .asc{
                display: inline-block;
                margin: 0 4px 2px 10px;
                border: 4px solid transparent;
                border-bottom: 5px solid #333;
                border-top: 0;
            }
            .market td{
                height: 20px;
                padding: 0 4px 0 0;
                border-bottom: 1px solid #ccc;
                border-right: 1px solid #ccc;
                color: #1414ff;
                text-align: right;
            }
            .market td:first-child{
                text-align: left;
                color: #111;
            }
            .market td:last-child, .market th:last-child{
                border-right: 0;
            }
            .market svg{
                width: 10px;
                height: 10px;
                margin-right: 6px;
                vertical-align: -2px;
            }
            .market tr:nth-child(even){
                background-color: #efefef;
            }
            .market tr.hot{
                background-color: #e2f4ff;
            }
            .market .off td:first-child{
                color: #999;
            }
            .market td.dn{
                color: #f01010;
            }
            .market td.flat{
                color: #111;
            }
            .tree{
                margin: 0;
                padding: 0;
                list-style: none;
                white-space: nowrap;
                overflow: hidden;
            }
            .tree li{
                display: flex;
                align-items: center;
                height: 18px;
                padding-left: 41px;
                background: repeating-linear-gradient(#999 0 1px, transparent 1px 2px) 7px 0 / 1px 18px no-repeat, repeating-linear-gradient(#999 0 1px, transparent 1px 2px) 28px 0 / 1px 18px no-repeat, repeating-linear-gradient(90deg, #999 0 1px, transparent 1px 2px) 29px 9px / 10px 1px no-repeat;
            }
            .tree .l1{
                padding-left: 20px;
                background: none;
            }
            .tree .l3{
                padding-left: 62px;
                background: repeating-linear-gradient(#999 0 1px, transparent 1px 2px) 7px 0 / 1px 18px no-repeat, repeating-linear-gradient(#999 0 1px, transparent 1px 2px) 49px 0 / 1px 18px no-repeat, repeating-linear-gradient(90deg, #999 0 1px, transparent 1px 2px) 50px 9px / 10px 1px no-repeat;
            }
            .tree svg{
                flex: none;
                width: 16px;
                height: 16px;
                margin-right: 6px;
            }
            .box{
                width: 9px;
                height: 9px;
                margin: 0 8px 0 -17px;
                border: 1px solid #999;
                background-color: #fff;
                color: #2a4a9a;
                font: 9px/7px "DejaVu Sans", sans-serif;
                text-align: center;
            }

/*----- TABS -----*/
            .tabs{
                display: flex;
                height: 20px;
                border-top: 1px solid #111;
                color: #777;
                overflow: hidden;
                white-space: nowrap;
            }
            .tabs > a{
                position: relative;
                padding: 0 11px;
                line-height: 17px;
            }
            .tabs > a + a:not(.active)::before{
                content: "";
                position: absolute;
                left: 0;
                top: 4px;
                height: 12px;
                border-left: 1px solid #888;
            }
            .tabs > a.active{
                padding: 0 9px 0 7px;
                border: 1px solid #111;
                border-width: 0 2px 2px 0;
                background-color: #fff;
                color: #111;
            }
            .tabs > a.active + a::before{
                display: none;
            }
            .chart-tabs{
                flex: none;
                height: 24px;
                border-bottom: 1px solid #999;
                line-height: 20px;
            }
            .chart-tabs > a{
                padding: 0 13px;
                line-height: 19px;
            }
            .chart-tabs > a.active, .tool-tabs > a.active{
                height: 19px;
                padding: 0 10px;
                border-left-width: 2px;
            }
            .tab-arrows{
                margin-left: auto;
                padding-right: 4px;
                font-size: 12px;
            }
            .tab-arrows span{
                margin-left: 14px;
            }

/*----- CHART WINDOWS -----*/
            .mdi{
                flex: 1;
                min-width: 0;
                display: flex;
                flex-direction: column;
            }
            .windows{
                flex: 1;
                min-height: 0;
                display: flex;
                padding-bottom: 3px;
            }
            .win{
                flex: 1;
                min-width: 0;
                display: flex;
                flex-direction: column;
                padding: 0 7px 7px 6px;
                border: solid #777;
                border-width: 0 0 1px 1px;
                background-color: #f5f5f5;
            }
            .win.short{
                margin-bottom: 4px;
            }
            .win.current{
                background-color: #fff;
            }
            .win header{
                display: flex;
                align-items: center;
                height: 29px;
                padding: 0 8px 3px 0;
                color: #777;
            }
            .win.short header{
                height: 26px;
            }
            .win.current header{
                color: #000;
            }
            .win header svg{
                width: 15px;
                height: 15px;
                margin: 0 5px 0 2px;
            }
            .win header span{
                flex: 1;
            }
            .win header button{
                display: flex;
                justify-content: center;
                width: 20px;
                margin-left: 16px;
                font-size: 12px;
            }
            .min, .max{
                width: 9px;
                height: 9px;
                border: 1px solid;
            }
            .min{
                border-width: 0 0 2px;
            }
            .client{
                flex: 1;
                position: relative;
                min-height: 0;
                background-color: #c0c0c0;
                border: solid #777;
                border-width: 2px 0 0 2px;
            }
            .chart{
                display: block;
                width: 100%;
                height: 100%;
                font: 9px "DejaVu Sans Condensed", "DejaVu Sans", sans-serif;
                shape-rendering: crispEdges;
            }
            .chart .tag{
                font: 20px "Open Sans", sans-serif;
            }
            .trade-buttons{
                position: absolute;
                top: 25px;
                right: 63px;
                display: flex;
                flex-direction: column;
                gap: 4px;
                width: 114px;
            }
            .trade-buttons button{
                height: 19px;
                border: 2px outset #32cd32;
                background-color: #32cd32;
                color: #5c8a5c;
                font: 12px/14px "Liberation Mono", monospace;
            }
            .trade-buttons .sell{
                border-color: #888;
                background-color: #808080;
                color: #111;
            }

/*----- TOOLBOX -----*/
            .toolbox{
                flex: none;
                display: flex;
                height: 154px;
                border-bottom: 1px solid #999;
            }
            .strip{
                width: 6px;
                display: flex;
                align-items: flex-end;
                justify-content: flex-end;
                padding-bottom: 5px;
                overflow: hidden;
                background-color: #ccdaea;
            }
            .strip span{
                writing-mode: vertical-rl;
                transform: rotate(180deg);
            }
            .toolbox-body{
                flex: 1;
                display: flex;
                flex-direction: column;
                border-left: 1px solid #999;
                background-color: #fff;
            }
            .history th, .history td{
                height: 20px;
                padding: 0 3px 0 0;
                border-right: 1px solid #ccc;
                text-align: right;
                white-space: nowrap;
            }
            .history th{
                height: 25px;
                padding-right: 5px;
            }
            .history th:first-child, .history td:first-child{
                padding-left: 3px;
                text-align: left;
            }
            .history th:first-child{
                padding-left: 5px;
            }
            .history th:last-child, .history td:last-child{
                padding-right: 3px;
                border-right: 0;
            }
            .history svg{
                width: 13px;
                height: 14px;
                margin-right: 5px;
                vertical-align: -3px;
            }
            .history .alt{
                border-top: 1px solid #ccc;
                background-color: #efefef;
            }
            .history .total{
                background-color: #c9c9c9;
                font-weight: bold;
            }
            .history .total td{
                border: 0;
                padding-right: 4px;
            }
            .bullet{
                display: inline-block;
                width: 6px;
                height: 6px;
                margin: 0 8px 1px 4px;
                border-radius: 3px;
                background-color: #999;
            }
            .c1{ width: 159px; }
            .c2{ width: 141px; }
            .c3{ width: 108px; }
            .c4{ width: 94px; }
            .c5{ width: 155px; }
            .c6{ width: 139px; }
            .c7{ width: 99px; }
            .tool-tabs{
                height: 24px;
                margin-top: auto;
                background-color: #f0f0f0;
            }
            .tool-tabs sub{
                color: #f01010;
                font-size: 9px;
                line-height: 0;
            }
            .links{
                display: flex;
                gap: 14px;
                margin-left: auto;
                padding: 2px 7px 4px 0;
                color: #111;
            }
            .links a{
                display: flex;
                align-items: center;
                gap: 2px;
            }
            .links svg{
                width: 16px;
                height: 16px;
            }

/*----- STATUS -----*/
            .status{
                flex: none;
                display: flex;
                height: 23px;
                padding: 4px 0 1px;
            }
            .status span{
                width: 70px;
                padding-left: 5px;
                border-left: 1px solid #999;
            }
            .status .hint{
                flex: 1;
                padding: 0;
                border: 0;
                text-indent: -6px;
            }
            .status .s1{
                width: 128px;
            }
            .status .s2{
                width: 99px;
            }
            .status .net{
                display: flex;
                gap: 3px;
                width: 110px;
            }
            .net svg{
                width: 16px;
                height: 16px;
            }
            .taskbar{
                flex: none;
                display: flex;
                justify-content: space-between;
                height: 12px;
                padding-right: 66px;
                overflow: hidden;
                background: linear-gradient(90deg, #1c3742, #14263a);
                color: #fff;
                line-height: 20px;
            }
            .apps{
                width: 600px;
                height: 12px;
            }
```

FILE: charts.js
```
            // candles: [open, high, low, close] in quarter-point ticks above base
            var m1 = [[9,10,9,10],[8,12,7,11],[11,11,9,10],[9,10,7,9],[9,10,7,10],[8,10,7,9],[9,10,8,9],[9,10,6,10],[11,12,11,12],[12,15,12,14],
                [14,16,14,15],[15,16,13,15],[15,19,15,18],[17,19,16,19],[19,19,17,18],[18,18,14,15],[14,14,7,9],[9,9,8,8],[8,11,8,10],[9,9,2,2],
                [2,7,2,5],[6,7,4,6],[6,8,4,7],[6,10,6,9],[9,11,9,9],[9,13,9,12],[11,16,9,15],[14,16,12,14],[14,16,13,15],[14,16,14,15],
                [15,15,13,14],[14,15,10,12],[12,13,11,12],[12,14,10,14],[14,15,13,14],[14,14,11,12],[12,14,11,13],[13,14,11,12],[12,13,11,12],[12,14,11,13],
                [13,15,13,14],[14,15,13,14],[14,16,14,14],[15,16,13,14],[14,15,13,14],[14,16,13,14],[14,15,12,12],[12,14,11,14],[15,16,12,15],[15,16,15,16],
                [16,16,15,15],[16,16,15,16],[16,16,15,15],[15,16,14,14],[15,15,14,14],[14,16,14,15],[16,16,11,12],[11,14,11,13],[12,13,11,11],[11,15,11,15],
                [15,16,13,14],[14,15,8,10],[10,10,6,7],[8,11,7,10],[9,13,9,13],[13,13,12,12],[12,12,9,10],[9,13,9,12],[12,12,9,9],[11,12,7,7],
                [7,11,7,9],[9,11,8,11],[10,12,8,11],[11,13,10,11],[11,11,7,10],[11,14,10,13],[12,15,12,13],[14,15,9,14],[14,16,13,14],[14,16,13,14],
                [14,16,13,15],[15,16,13,15],[16,18,13,14],[14,16,12,14],[14,16,14,16],[16,18,15,18],[17,23,16,21],[21,21,19,19],[18,18,14,16],[16,16,11,15],
                [15,18,14,17],[16,20,15,19],[19,19,15,17],[17,22,17,19],[19,22,18,20],[19,23,19,22],[22,23,21,22],[21,22,18,19],[20,21,15,19],[18,20,16,19],
                [20,34,20,33],[33,35,31,35],[34,35,31,31],[31,34,31,32],[32,32,26,30],[29,30,27,28],[27,31,26,27],[27,29,26,26],[27,27,24,26],[26,26,24,25]];

            var m5 = [[20,20,16,16],[20,22,14,22],[22,25,19,20],[21,23,17,19],[19,34,17,34],[33,42,30,41],[41,44,35,39],[39,39,24,24],[24,29,21,25],[25,31,20,29],
                [29,35,26,26],[26,35,26,32],[31,38,29,36],[36,46,36,41],[41,42,32,35],[35,41,34,40],[40,47,36,47],[47,62,46,56],[57,62,51,55],[56,59,50,56],
                [55,61,53,57],[57,64,54,63],[63,69,57,59],[60,61,54,55],[55,61,54,61],[60,64,54,58],[59,63,56,62],[62,65,59,64],[65,66,59,61],[62,72,60,63],
                [63,63,59,63],[63,68,60,61],[60,72,60,68],[68,68,56,56],[57,63,56,62],[62,62,56,57],[57,57,47,49],[50,51,41,42],[43,43,29,34],[35,38,32,36],
                [36,41,33,41],[41,54,41,50],[51,52,45,48],[47,55,47,50],[50,51,45,46],[46,49,36,39],[39,46,23,41],[42,42,19,25],[26,38,21,29],[29,50,26,31],
                [32,38,9,19],[19,30,17,22],[22,28,7,27],[27,50,24,39],[39,43,31,41],[42,56,40,49],[48,59,48,54],[54,58,49,55],[55,63,53,59],[59,62,57,61],
                [62,63,58,60],[60,68,56,68],[67,77,66,73],[73,80,71,80],[80,83,73,80],[80,90,79,90],[90,106,89,105],[105,111,97,99],[100,106,97,102],[103,109,102,102],
                [102,107,100,102],[102,102,90,95],[94,97,88,92],[91,98,90,93],[93,97,89,90],[90,93,84,87],[87,98,87,95],[95,100,94,96],[96,101,95,96],[97,98,93,94],
                [95,98,92,98],[98,104,97,103],[103,103,92,95],[94,97,93,95],[96,99,92,96],[97,102,95,101],[101,104,98,99],[99,101,95,97],[97,100,95,97],[97,104,94,102],
                [103,107,101,102],[102,102,90,93],[94,100,92,100],[99,104,98,101],[102,103,98,101],[100,104,99,102],[102,106,98,101],[102,104,99,104],[104,104,101,103],[104,104,98,101],
                [102,103,94,100],[99,102,95,98],[98,103,95,102],[101,104,97,103],[103,107,98,106],[105,111,99,104],[105,111,102,111],[111,122,103,121],[121,123,114,116],[116,119,112,113]];

            // bars before the m1 series, from a rough path of mid prices
            var early = [];
            var path = [[0,17],[4,19],[8,14],[11,10],[14,19],[17,15],[20,15],[22,12],[25,6],[29,8],[32,3],[35,6],[39,8],[43,1],[47,-3],[49,3],[52,9],[55,10],[58,5],[61,8],[65,7],[70,9],[74,10],[76,13],[79,11],[83,11],[90,10],[95,9],[100,12],[107,9]];
            for (var p = 1; p < path.length; p++){
                for (var k = path[p - 1][0]; k < path[p][0]; k++){
                    var f = (k - path[p - 1][0]) / (path[p][0] - path[p - 1][0]);
                    var mid = path[p - 1][1] + (path[p][1] - path[p - 1][1]) * f;
                    early.push([mid, mid + 1 + (k * 7 % 3), mid - 1 - (k * 5 % 3), mid]);
                }
            }

            // tick volumes, negative = falling
            var vol1 = [0,-25,-9,24,-9,15,-12,24,27,-27,-27,27,72,-21,-15,24,102,-9,30,54,-24,33,-15,48,-18,24,60,-24,27,-12,24,30,-15,-15,15,-9,12,-9,-9,21,-21,-6,15,21,-15,15,18,-18,18,21,-3,9,-6,12,15,-12,30,-21,-12,27,-18,63,-45,-24,-18,-15,27,-15,-12,21,-12,15,-12,36,48,-36,-36,-15,27,-12,24,-21,51,-27,-18,27,114,-30,60,-57,-21,24,-24,27,-21,27,27,30,42,-15,231,-108,-63,-39,69,-51,-42,-33,36,-21];
            var vol2 = [0,-6,-5,-5,6,8,-8,-6,-6,6,-5,-5,6,7,6,-5,9,19,-10,-8,-8,-8,12,-6,5,6,-5,5,10,15,-6,8,8,21,-8,9,15,21,26,-15,16,22,-9,12,-10,32,174,-131,-105,141,-136,-81,120,153,-75,97,-52,-48,66,-37,52,76,78,-44,61,63,112,-100,-65,-44,-37,61,-37,-31,-25,37,42,-31,-29,-22,-23,44,-35,20,-28,-22,-22,26,-20,26,31,44,-30,38,-22,-23,-20,20,20,-12,25,38,-18,25,32,39,42,-27,60,66,-24];
            var vol3 = [177,-90,162,-105,-63,132,-93,-78,-66,66,90,93,-33,60,-33,60,-36,42,-30,42,-18,39,51,132,-102,-42,60,-27,30,36,102,-54,-45,63,-24,45,-36,-33,-15,-15,42,-33,-33,72,-48,-24,60,75,-42,42,45,-33,-39,84,-27,-18,24,39,-33,-24,-21,-18,36,24,-15,18,30,-15,27,-15,33,-21,21,33,63,-24,99,-45,-18,57,-36,-36,-21,-21,-18,27,-12,27,-18,24,24,27,-21,-12,15,-27,30,-12,24,27,36,45,-36,-12,36,30,-39];

            function draw(id, o){
                var svg = document.getElementById(id);
                var W = svg.clientWidth, H = svg.clientHeight;
                var L = 1, T = 1, R = W - 54, B = H - o.split, VT = B + 3, VB = H - 21;
                var out = '';

                function y(price){ return Math.round(T + o.topY + (o.top - price) * o.scale); }
                function x(i){ return L + i * o.step; }
                // the half pixel keeps one-pixel strokes sharp
                function line(x1, y1, x2, y2, c, extra){
                    var v = x1 == x2 ? 0.5 : 0, h = y1 == y2 ? 0.5 : 0;
                    out += '<line x1="' + (x1 + v) + '" y1="' + (y1 + h) + '" x2="' + (x2 + v) + '" y2="' + (y2 + h) + '" stroke="' + c + '" ' + (extra || '') + '/>';
                }
                function rect(a, b, w, h, fill, extra){
                    out += '<rect x="' + a + '" y="' + b + '" width="' + w + '" height="' + h + '" fill="' + fill + '" ' + (extra || '') + '/>';
                }
                function text(a, b, s, extra){
                    out += '<text x="' + a + '" y="' + b + '" ' + (extra || '') + '>' + s + '</text>';
                }

                o.zones.forEach(function(z){
                    rect(x(z[0]), y(z[1]), x(o.zoneEnd) - x(z[0]), y(z[2]) - y(z[1]), z[3] ? '#8080ff' : '#aaaaff');
                });

                // grid
                for (var g = L + 32, n = 0; g < R; g += 32, n++){
                    line(g, T, g, B, '#000', 'stroke-dasharray="5 4"');
                    line(g, n ? VT : VT + 16, g, VB, '#000', 'stroke-dasharray="5 4"');
                    if (n % 2 == 1 && n < 13){ line(g, VB, g, VB + 4, '#000'); }
                }
                for (var i = 0; i < o.labels; i++){
                    var price = o.top - i * o.every;
                    line(L, y(price), R, y(price), '#000', 'stroke-dasharray="3 3"');
                    line(R, y(price), R + 4, y(price), '#000');
                    text(R + 5, y(price) + 4, price.toFixed(2));
                }

                // price levels
                o.lines.forEach(function(l){
                    line(L, y(l[0]), R, y(l[0]), l[1], l[2]);
                    if (l[3]){ text(L + 5, y(l[0]) - 2, l[3]); }
                });

                // candles
                o.bars.forEach(function(c, i){
                    var cx = x(i), a = y(o.base + Math.max(c[0], c[3]) / 4), b = y(o.base + Math.min(c[0], c[3]) / 4);
                    line(cx, y(o.base + c[1] / 4), cx, y(o.base + c[2] / 4), '#000');
                    if (o.step > 2){
                        if (c[0] == c[3]){ line(cx - 1, a, cx + 2, a, '#000'); }
                        else if (c[0] > c[3]){ rect(cx - 1, a, 3, b - a, '#000'); }
                        else { rect(cx - 0.5, a + 0.5, 2, b - a, '#fff', 'stroke="#000"'); }
                    }
                });
                o.vol.forEach(function(v, i){
                    var h = Math.round(Math.abs(v) * o.volScale);
                    rect(x(i), VB - h, o.step > 2 ? 2 : 1, h, v < 0 ? '#f00' : '#008000');
                });

                (o.dots || []).forEach(function(d){
                    for (var i = d[0]; i <= d[1]; i++){
                        out += '<circle shape-rendering="auto" cx="' + x(i) + '" cy="' + y(d[2]) + '" r="' + (d[4] || 2.3) + '" fill="' + (d[3] || '#000') + '"/>';
                    }
                });
                (o.crosses || []).forEach(function(c){
                    var a = x(c[0]), b = y(c[1]);
                    out += '<path shape-rendering="auto" d="M' + (a - 3) + ' ' + (b - 3) + 'l6 6m0 -6l-6 6" stroke="#f01020" stroke-width="2"/>';
                });
                (o.tags || []).forEach(function(t){
                    rect(t[0] + 0.5, t[1] + 0.5, 77, 25, 'none', 'stroke="' + t[3] + '"');
                    text(t[0] + 4, t[1] + 20, t[2], 'class="tag" fill="' + t[3] + '"');
                    if (t[4]){
                        line(t[0] + 77, t[1] + 13, t[4], t[1] + 13, t[3]);
                        out += '<circle shape-rendering="auto" cx="' + t[4] + '" cy="' + (t[1] + 13) + '" r="2.500" fill="' + t[3] + '"/>';
                    }
                });
                (o.arrows || []).forEach(function(a){
                    out += '<path shape-rendering="auto" transform="translate(' + x(a[0]) + ' ' + y(a[1]) + ')' + (a[2] ? ' rotate(180)' : '') + '" d="M0 -4l4 4h-2v4h-4v-4h-2z" fill="' + (a[2] ? '#f04020' : '#0a6ac0') + '" stroke="#fff"/>';
                });

                // frames
                rect(0, T, L, B, '#c0c0c0');
                rect(L + 0.5, T + 0.5, R - L, B - T, 'none', 'stroke="#000"');
                rect(L + 0.5, VT + 0.5, R - L, VB - VT, 'none', 'stroke="#000"');
                var m = x(o.bars.length - 1);
                out += '<path d="M' + (m - 5) + ' ' + T + 'h10l-5 5z"/>';

                o.quotes.forEach(function(q){
                    rect(R + 2, y(q[0]) - 5, 39, 10, q[1]);
                    text(R + 5, y(q[0]) + 4, q[0].toFixed(2), 'fill="' + q[2] + '"');
                });

                out += '<use href="#i-market" x="6" y="6" width="14" height="12"/><use href="#i-trade" x="23" y="6" width="14" height="12"/>';
                text(43, 15, o.title);
                if (o.stamp){ text(6, 29, o.stamp); }
                if (o.expert){
                    text(R - 21, 15, o.expert, 'text-anchor="end"');
                    out += '<use href="#i-algo" x="' + (R - 16) + '" y="5" width="14" height="14"/>';
                }
                text(L + 3, VT + 12, 'Volumes ' + o.volume);
                line(R, VT + 1, R + 4, VT + 1, '#000');
                line(R, VB, R + 4, VB, '#000');
                text(R + 5, VT + 9, o.volMax);
                text(R + 5, VB - 2, '0');
                o.times.forEach(function(t, i){
                    text(L + i * 64 - 1, VB + 13, '22 Jun ' + t);
                });
                svg.innerHTML = out;
            }

            var dashdot = 'stroke-dasharray="9 5 3 5"';

            draw('chart1', {
                bars: m1, base: 4226, step: 4, top: 4240.75, topY: 33, scale: 25.45, every: 1.5, labels: 15, split: 108,
                zoneEnd: 107.5,
                zones: [[2, 4232.2, 4231.2, 0], [0, 4226.5, 4225.45, 1], [0, 4222.5, 4221.95, 0], [0, 4221.95, 4220.95, 1]],
                lines: [[4235.5, '#ff4500', dashdot, 'TP'], [4228.25, '#ff4500', dashdot, 'SL'], [4232, '#008000', 'stroke-dasharray="3 3"', 'BUY 1 at 4232.00'], [4232.25, '#2e8b57'], [4232.5, '#f00']],
                quotes: [[4232.5, '#f00', '#fff'], [4232.25, '#2e8b57', '#fff']],
                dots: [[0, 7, 4227.5], [19, 25, 4229.75], [26, 35, 4228], [60, 61, 4228.5], [84, 84, 4228.75], [85, 87, 4229.25], [88, 88, 4229.5], [100, 100, 4229.5], [101, 101, 4230.5], [102, 104, 4230.75], [105, 105, 4231.25], [106, 107, 4231.75], [108, 108, 4232.5],
                    [16, 16, 4227.75, '#008000', 3], [39, 39, 4229, '#008000', 3], [108, 108, 4232, '#008000', 3], [25, 25, 4229, '#ff6347', 3], [59, 59, 4229.75, '#ff6347', 3], [83, 83, 4229.75, '#ff6347', 3], [98, 98, 4231.25, '#ff6347', 3]],
                crosses: [[35, 4228.75], [88, 4230.5]],
                arrows: [[109, 4231.8]],
                tags: [[334, 243, '4232.00', '#008000', 433]],
                vol: vol1, volScale: 1 / 3, volume: 321, volMax: 3843,
                title: 'MESU21, M1:&#160; Micro E-mini S&amp;P 500 ($5): September 2021&#160; 4232.50 4232.50 4232.00 4232.25',
                stamp: '2021.06.22 18:48:33; MESU21', expert: 'ScalpEx_2_EA_license',
                times: ['2021', '17:15', '17:31', '17:47', '18:03', '18:19', '18:35']
            });

            draw('chart2', {
                bars: m5, base: 4204, step: 4, top: 4234, topY: 27, scale: 18.04, every: 2, labels: 16, split: 113,
                zoneEnd: 109.5,
                zones: [[88, 4232.25, 4231.2, 0], [28, 4226.75, 4225.7, 1], [52, 4222.5, 4222, 0], [0, 4222, 4220.95, 1], [4, 4206.25, 4205.2, 0]],
                lines: [[4232.5, '#f00'], [4232.25, '#7fff00', 'stroke-width="2"']],
                quotes: [[4232.5, '#f00', '#fff'], [4232.25, '#7fff00', '#d8ffb0']],
                vol: vol2, volScale: 0.473, volume: 4040, volMax: 30890,
                title: 'EPU21, M5:&#160; E-Mini S&amp;P 500: September 2021&#160; 4233.00 4233.75 4232.00 4232.25',
                stamp: '2021.06.22 18:48:37; EPU21',
                times: ['2021', '11:00', '12:20', '13:40', '15:00', '16:20', '17:40']
            });

            draw('chart3', {
                bars: early.concat(m1), base: 4226, step: 2, top: 4239.5, topY: 14, scale: 13.85, every: 2.5, labels: 16, split: 114,
                zoneEnd: 0, zones: [],
                lines: [[4235.5, '#ff4500', dashdot, 'TP'], [4228.25, '#ff4500', dashdot, 'SL'], [4232, '#008000', 'stroke-dasharray="3 3"', 'BUY 1 at 4232.00'], [4232.25, '#7fff00', 'stroke-width="2"'], [4232.5, '#f00']],
                quotes: [[4232.5, '#f00', '#fff'], [4232.25, '#7fff00', '#d8ffb0']],
                dots: [[19, 23, 4229], [34, 37, 4226.5], [80, 89, 4229.75], [91, 100, 4226.75], [102, 106, 4228.5], [126, 132, 4229.75], [133, 142, 4228.75], [148, 152, 4228.75], [167, 169, 4228.5], [185, 185, 4228], [186, 187, 4228.5], [187, 189, 4228.75], [190, 192, 4229], [193, 195, 4229.5], [207, 207, 4229.5], [208, 211, 4231], [212, 212, 4231.5], [213, 213, 4232], [214, 214, 4232.7]],
                crosses: [[37, 4226.75], [111, 4228.5], [152, 4229.25], [174, 4229], [180, 4229.25], [195, 4230.5]],
                arrows: [[35, 4227], [70, 4227.5, 1], [216, 4231.7]],
                tags: [[-61, 135, '4230.00', '#0000ff', 38], [-31, 162, '4228.00', '#008000', 68], [-23, 180, '4226.75', '#dc143c', 76],
                    [63, 166, '4227.75', '#ff6347'], [81, 162, '4228.00', '#008000'], [125, 155, '4228.50', '#008000', 180], [149, 166, '4227.75', '#ff6347', 248],
                    [179, 138, '4229.75', '#0000ff', 270], [189, 149, '4229.00', '#dc143c'], [196, 142, '4229.50', '#008000'], [206, 142, '4229.50', '#0000ff', 330],
                    [236, 138, '4229.75', '#008000'], [251, 149, '4229.00', '#008000'], [272, 142, '4229.50', '#0000ff'], [283, 138, '4229.75', '#0000ff', 382], [293, 127, '4230.50', '#0000ff', 387], [313, 116, '4231.25', '#0000ff', 412]],
                vol: vol3.concat(vol1), volScale: 0.355, volume: 321, volMax: 3843,
                title: 'MESU21, M1:&#160; Micro E-mini S&amp;P 500 ($5): September 2021&#160; 4232.50 4232.50 4232.00 4232.25',
                expert: 'ScalpEx_2(Revers)_EA_license',
                times: ['2021', '15:44', '16:16', '16:48', '17:20', '17:52', '18:24']
            });
```
